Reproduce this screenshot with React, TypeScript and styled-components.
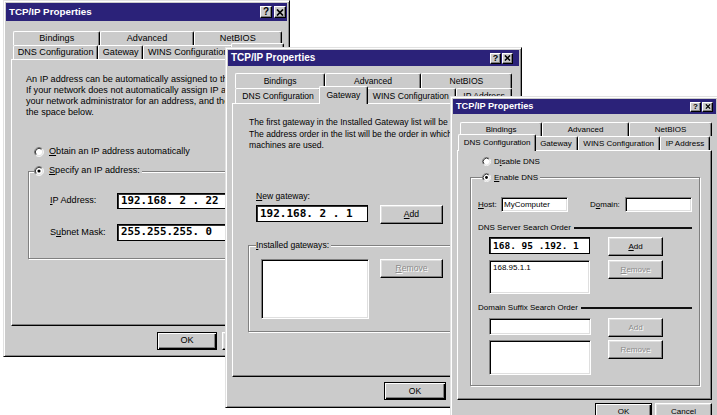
import React from 'react';
import styled, { createGlobalStyle, css } from 'styled-components';

const FACE = '#cbcbcb';
const TITLE = '#2b2279';

const GlobalStyle = createGlobalStyle`
  * { box-sizing: border-box; }
  html, body { margin: 0; padding: 0; background: #fff; }
  body {
    font-family: "Liberation Sans", Arial, sans-serif;
    color: #000;
  }
  u { text-decoration-thickness: 1px; text-underline-offset: 1px; }
`;

const Desktop = styled.div`
  position: relative;
  width: 717px;
  height: 415px;
  overflow: hidden;
  background: #fff;
`;

// dialogs sit on a free desktop, so they are placed by coordinates
const Window = styled.div<{ $x: number; $y: number; $w: number; $h: number; $fs: number }>`
  position: absolute;
  isolation: isolate;
  left: ${p => p.$x}px;
  top: ${p => p.$y}px;
  width: ${p => p.$w}px;
  height: ${p => p.$h}px;
  display: flex;
  flex-direction: column;
  padding: 2px;
  background: ${FACE};
  border: 1px solid;
  border-color: #e2e2e2 #000 #000 #e2e2e2;
  box-shadow: inset 1px 1px #fff, inset -1px -1px #8a8a8a;
  font-size: ${p => p.$fs}px;
  line-height: 1;
`;

const TitleBar = styled.div<{ $h: number; $fs: number; $pr: number }>`
  flex: none;
  display: flex;
  align-items: center;
  justify-content: space-between;
  height: ${p => p.$h}px;
  padding: 0 ${p => p.$pr}px 0 3px;
  background: ${TITLE};
  color: #fff;
  font-weight: bold;
  font-size: ${p => p.$fs}px;
  white-space: nowrap;
`;

const CaptionButtons = styled.div<{ $gap: number }>`
  display: flex;
  gap: ${p => p.$gap}px;
`;

const CaptionButton = styled.div<{ $w: number; $h: number }>`
  width: ${p => p.$w}px;
  height: ${p => p.$h}px;
  display: flex;
  align-items: center;
  justify-content: center;
  background: ${FACE};
  border: 1px solid;
  border-color: #fff #000 #000 #fff;
  box-shadow: inset -1px -1px #808080;
  color: #000;
  font-size: ${p => p.$h - 2}px;
  font-weight: bold;
  font-family: "Liberation Sans", Arial, sans-serif;
`;

const Body = styled.div<{ $pt: number; $px: number }>`
  display: flex;
  flex-direction: column;
  padding: ${p => p.$pt}px ${p => p.$px}px 0;
`;

const TabRow = styled.div<{ $h: number; $ml: number; $mr: number }>`
  display: flex;
  height: ${p => p.$h}px;
  margin: 0 ${p => p.$mr}px 0 ${p => p.$ml}px;
`;

const Tab = styled.div<{ $active?: boolean }>`
  flex: 1 1 auto;
  display: flex;
  align-items: center;
  justify-content: center;
  white-space: nowrap;
  background: ${FACE};
  border-top: 1px solid #fff;
  border-left: 1px solid #fff;
  border-right: 1px solid #000;
  box-shadow: inset -1px 0 #808080;
  border-radius: 2px 2px 0 0;
  ${p => p.$active && css`
    position: relative;
    z-index: 2;
    margin: -2px -2px -1px;
    padding-bottom: 1px;
  `}
`;

const Panel = styled.div<{ $h: number }>`
  flex: none;
  height: ${p => p.$h}px;
  display: flex;
  flex-direction: column;
  align-items: flex-start;
  border: 1px solid;
  border-color: #fff #000 #000 #fff;
  box-shadow: inset -1px -1px #808080;
`;

const Para = styled.p<{ $mt: number; $ml: number; $lh: number }>`
  margin: ${p => p.$mt}px 0 0 ${p => p.$ml}px;
  line-height: ${p => p.$lh}px;
  white-space: nowrap;
`;

const Caption = styled.div<{ $mt: number; $ml: number; $h: number }>`
  margin: ${p => p.$mt}px 0 0 ${p => p.$ml}px;
  height: ${p => p.$h}px;
  line-height: ${p => p.$h}px;
  white-space: nowrap;
`;

const RadioRow = styled.div<{ $mt: number; $ml: number; $h: number; $gap: number }>`
  display: flex;
  align-items: center;
  gap: ${p => p.$gap}px;
  height: ${p => p.$h}px;
  margin: ${p => p.$mt}px 0 0 ${p => p.$ml}px;
  white-space: nowrap;
`;

const RadioSvg = styled.svg`
  flex: none;
  display: block;
`;

const Group = styled.fieldset<{ $mt: number; $ml: number; $w: number; $pb: number }>`
  margin: ${p => p.$mt}px 0 0 ${p => p.$ml}px;
  width: ${p => p.$w}px;
  min-width: 0;
  padding: 0 0 ${p => p.$pb}px;
  border: 1px solid #808080;
  box-shadow: 1px 1px 0 #fff, inset 1px 1px 0 #fff;
`;

const Legend = styled.legend<{ $ml: number; $h: number; $gap?: number }>`
  display: flex;
  align-items: center;
  gap: ${p => p.$gap ?? 0}px;
  height: ${p => p.$h}px;
  margin-left: ${p => p.$ml}px;
  padding: 0 2px 0 0;
  background: ${FACE};
  white-space: nowrap;
`;

const FieldRow = styled.div<{ $mt: number; $ml: number; $gap?: number; $top?: boolean }>`
  display: flex;
  align-items: ${p => (p.$top ? 'flex-start' : 'center')};
  gap: ${p => p.$gap ?? 0}px;
  margin: ${p => p.$mt}px 0 0 ${p => p.$ml}px;
`;

const FieldLabel = styled.span<{ $w: number; $ml?: number }>`
  flex: none;
  width: ${p => p.$w}px;
  margin-left: ${p => p.$ml ?? 0}px;
  white-space: nowrap;
`;

const Field = styled.div<{ $w: number; $h: number; $strong?: boolean; $list?: boolean }>`
  flex: none;
  width: ${p => p.$w}px;
  height: ${p => p.$h}px;
  display: flex;
  align-items: ${p => (p.$list ? 'flex-start' : 'center')};
  padding: ${p => (p.$list ? '3px 3px' : '0 2px')};
  background: #fff;
  white-space: nowrap;
  border: 1px solid;
  border-color: #808080 #fff #fff #808080;
  box-shadow: inset 1px 1px #000, inset -1px -1px #dfdfdf;
  ${p => p.$strong && css`
    border-color: #000;
    box-shadow: inset 1px 1px #333;
  `}
`;

const IpText = styled.span<{ $fs: number }>`
  font-family: "DejaVu Sans Mono", "Liberation Mono", monospace;
  font-weight: bold;
  font-size: ${p => p.$fs}px;
  white-space: pre;
  padding-left: 1px;
`;

const Button = styled.div<{ $w: number; $h: number; $default?: boolean; $disabled?: boolean }>`
  flex: none;
  width: ${p => p.$w}px;
  height: ${p => p.$h}px;
  display: flex;
  align-items: center;
  justify-content: center;
  background: ${FACE};
  border: 1px solid;
  border-color: #fff #000 #000 #fff;
  box-shadow: inset -1px -1px #808080, inset 1px 1px #dfdfdf;
  white-space: nowrap;
  ${p => p.$default && css`
    border-color: #000;
    box-shadow: inset 1px 1px #fff, inset -1px -1px #000, inset -2px -2px #808080;
  `}
  ${p => p.$disabled && css`
    color: #8c8c8c;
    text-shadow: 1px 1px 0 #fff;
  `}
`;

const SectionHead = styled.div<{ $mt: number; $ml: number; $mr: number }>`
  display: flex;
  align-items: center;
  height: 11px;
  margin: ${p => p.$mt}px ${p => p.$mr}px 0 ${p => p.$ml}px;
  white-space: nowrap;

  &::after {
    content: '';
    flex: 1;
    height: 2px;
    margin-left: 3px;
    background: #111;
  }
`;

const Footer = styled.div<{ $mt: number; $gap: number; $pr?: number }>`
  display: flex;
  justify-content: flex-end;
  gap: ${p => p.$gap}px;
  margin-top: ${p => p.$mt}px;
  padding-right: ${p => p.$pr ?? 0}px;
`;

const Radio = ({ size, checked }: { size: number; checked?: boolean }) => (
  <RadioSvg width={size} height={size} viewBox="0 0 12 12">
    <circle cx="6" cy="6" r="4.6" fill="#fff" />
    <path d="M2.11 9.89A5.5 5.5 0 0 1 9.89 2.11" stroke="#808080" fill="none" />
    <path d="M9.89 2.11A5.5 5.5 0 0 1 2.11 9.89" stroke="#fff" fill="none" />
    <path d="M2.82 9.18A4.5 4.5 0 0 1 9.18 2.82" stroke="#000" fill="none" />
    <path d="M9.18 2.82A4.5 4.5 0 0 1 2.82 9.18" stroke="#dfdfdf" fill="none" />
    {checked && <circle cx="6" cy="6" r="1.9" fill="#000" />}
  </RadioSvg>
);

const CloseGlyph = ({ size }: { size: number }) => (
  <svg width={size} height={size - 1} viewBox="0 0 8 7">
    <path d="M1 0.5L7 6.5M7 0.5L1 6.5" stroke="#000" strokeWidth="1.7" />
  </svg>
);

const Caps = ({ w, h, gap }: { w: number; h: number; gap: number }) => (
  <CaptionButtons $gap={gap}>
    <CaptionButton $w={w} $h={h}>?</CaptionButton>
    <CaptionButton $w={w} $h={h}>
      <CloseGlyph size={h - 4} />
    </CaptionButton>
  </CaptionButtons>
);

const IpAddressDialog = () => (
  <Window $x={3} $y={0} $w={287} $h={357} $fs={9.1}>
    <TitleBar $h={18} $fs={9.8} $pr={1}>
      <span>TCP/IP Properties</span>
      <Caps w={12} h={12} gap={2} />
    </TitleBar>
    <Body $pt={10} $px={5}>
      <TabRow $h={14} $ml={2} $mr={0}>
        <Tab>Bindings</Tab>
        <Tab>Advanced</Tab>
        <Tab>NetBIOS</Tab>
      </TabRow>
      <TabRow $h={14} $ml={2} $mr={0}>
        <Tab>DNS Configuration</Tab>
        <Tab>Gateway</Tab>
        <Tab>WINS Configuration</Tab>
        <Tab $active>IP Address</Tab>
      </TabRow>
      <Panel $h={267}>
        <Para $mt={14} $ml={14} $lh={11}>
          An IP address can be automatically assigned to this computer.
          <br />
          If your network does not automatically assign IP addresses, ask
          <br />
          your network administrator for an address, and then type it in
          <br />
          the space below.
        </Para>
        <RadioRow $mt={28} $ml={22} $h={12} $gap={5}>
          <Radio size={10} />
          <span><u>O</u>btain an IP address automatically</span>
        </RadioRow>
        <Group $mt={7} $ml={16} $w={242} $pb={17}>
          <Legend $ml={5} $h={12} $gap={5}>
            <Radio size={10} checked />
            <span><u>S</u>pecify an IP address:</span>
          </Legend>
          <FieldRow $mt={16} $ml={21}>
            <FieldLabel $w={67}><u>I</u>P Address:</FieldLabel>
            <Field $w={132} $h={16} $strong>
              <IpText $fs={10.8}>192.168. 2 . 22</IpText>
            </Field>
          </FieldRow>
          <FieldRow $mt={15} $ml={21}>
            <FieldLabel $w={67}>S<u>u</u>bnet Mask:</FieldLabel>
            <Field $w={132} $h={17} $strong>
              <IpText $fs={10.8}>255.255.255. 0</IpText>
            </Field>
          </FieldRow>
        </Group>
      </Panel>
      <Footer $mt={6} $gap={5}>
        <Button $w={60} $h={18} $default>OK</Button>
        <Button $w={60} $h={18}>Cancel</Button>
      </Footer>
    </Body>
  </Window>
);

const GatewayDialog = () => (
  <Window $x={225} $y={47} $w={297} $h={361} $fs={8.6}>
    <TitleBar $h={16} $fs={10} $pr={6}>
      <span>TCP/IP Properties</span>
      <Caps w={11} h={11} gap={1} />
    </TitleBar>
    <Body $pt={7} $px={4}>
      <TabRow $h={15} $ml={3} $mr={3}>
        <Tab>Bindings</Tab>
        <Tab>Advanced</Tab>
        <Tab>NetBIOS</Tab>
      </TabRow>
      <TabRow $h={15} $ml={3} $mr={3}>
        <Tab>DNS Configuration</Tab>
        <Tab $active>Gateway</Tab>
        <Tab>WINS Configuration</Tab>
        <Tab>IP Address</Tab>
      </TabRow>
      <Panel $h={274}>
        <Para $mt={13} $ml={16} $lh={11.5}>
          The first gateway in the Installed Gateway list will be the default.
          <br />
          The address order in the list will be the order in which these
          <br />
          machines are used.
        </Para>
        <Caption $mt={39} $ml={23} $h={11}>
          <u>N</u>ew gateway:
        </Caption>
        <FieldRow $mt={3} $ml={23} $gap={12} $top>
          <Field $w={112} $h={17} $strong>
            <IpText $fs={11}>192.168. 2 . 1</IpText>
          </Field>
          <Button $w={63} $h={19}><u>A</u>dd</Button>
        </FieldRow>
        <Group $mt={16} $ml={15} $w={251} $pb={12}>
          <Legend $ml={7} $h={12}>
            <span><u>I</u>nstalled gateways:</span>
          </Legend>
          <FieldRow $mt={7} $ml={12} $gap={11} $top>
            <Field $w={108} $h={60} $list />
            <Button $w={63} $h={19} $disabled><u>R</u>emove</Button>
          </FieldRow>
        </Group>
      </Panel>
      <Footer $mt={5} $gap={4} $pr={3}>
        <Button $w={62} $h={18} $default>OK</Button>
        <Button $w={62} $h={18}>Cancel</Button>
      </Footer>
    </Body>
  </Window>
);

const DnsDialog = () => (
  <Window $x={450} $y={96} $w={269} $h={330} $fs={8}>
    <TitleBar $h={15} $fs={9.2} $pr={3}>
      <span>TCP/IP Properties</span>
      <Caps w={11} h={10} gap={1} />
    </TitleBar>
    <Body $pt={8} $px={4}>
      <TabRow $h={14} $ml={3} $mr={0}>
        <Tab>Bindings</Tab>
        <Tab>Advanced</Tab>
        <Tab>NetBIOS</Tab>
      </TabRow>
      <TabRow $h={14} $ml={3} $mr={2}>
        <Tab $active>DNS Configuration</Tab>
        <Tab>Gateway</Tab>
        <Tab>WINS Configuration</Tab>
        <Tab>IP Address</Tab>
      </TabRow>
      <Panel $h={250}>
        <RadioRow $mt={5} $ml={24} $h={11} $gap={3}>
          <Radio size={9} />
          <span>D<u>i</u>sable DNS</span>
        </RadioRow>
        <Group $mt={5} $ml={12} $w={230} $pb={10}>
          <Legend $ml={11} $h={11} $gap={3}>
            <Radio size={9} checked />
            <span><u>E</u>nable DNS</span>
          </Legend>
          <FieldRow $mt={14} $ml={7}>
            <FieldLabel $w={23}><u>H</u>ost:</FieldLabel>
            <Field $w={67} $h={15}>MyComputer</Field>
            <FieldLabel $w={35} $ml={22}>D<u>o</u>main:</FieldLabel>
            <Field $w={67} $h={15} />
          </FieldRow>
          <SectionHead $mt={10} $ml={7} $mr={7}>DNS Server Search Order</SectionHead>
          <FieldRow $mt={4} $ml={18} $gap={18} $top>
            <Field $w={101} $h={17} $strong>
              <IpText $fs={9.5}>168. 95 .192. 1</IpText>
            </Field>
            <Button $w={55} $h={19}><u>A</u>dd</Button>
          </FieldRow>
          <FieldRow $mt={4} $ml={18} $gap={18} $top>
            <Field $w={101} $h={34} $list>168.95.1.1</Field>
            <Button $w={55} $h={19} $disabled><u>R</u>emove</Button>
          </FieldRow>
          <SectionHead $mt={8} $ml={7} $mr={7}>Domain Suffix Search Order</SectionHead>
          <FieldRow $mt={5} $ml={18} $gap={17} $top>
            <Field $w={102} $h={17} />
            <Button $w={55} $h={19} $disabled>Add</Button>
          </FieldRow>
          <FieldRow $mt={3} $ml={18} $gap={17} $top>
            <Field $w={102} $h={35} $list />
            <Button $w={55} $h={19} $disabled>Remove</Button>
          </FieldRow>
        </Group>
      </Panel>
      <Footer $mt={3} $gap={3}>
        <Button $w={57} $h={18} $default>OK</Button>
        <Button $w={57} $h={18}>Cancel</Button>
      </Footer>
    </Body>
  </Window>
);

const App = () => (
  <>
    <GlobalStyle />
    <Desktop>
      <IpAddressDialog />
      <GatewayDialog />
      <DnsDialog />
    </Desktop>
  </>
);

export default App;
